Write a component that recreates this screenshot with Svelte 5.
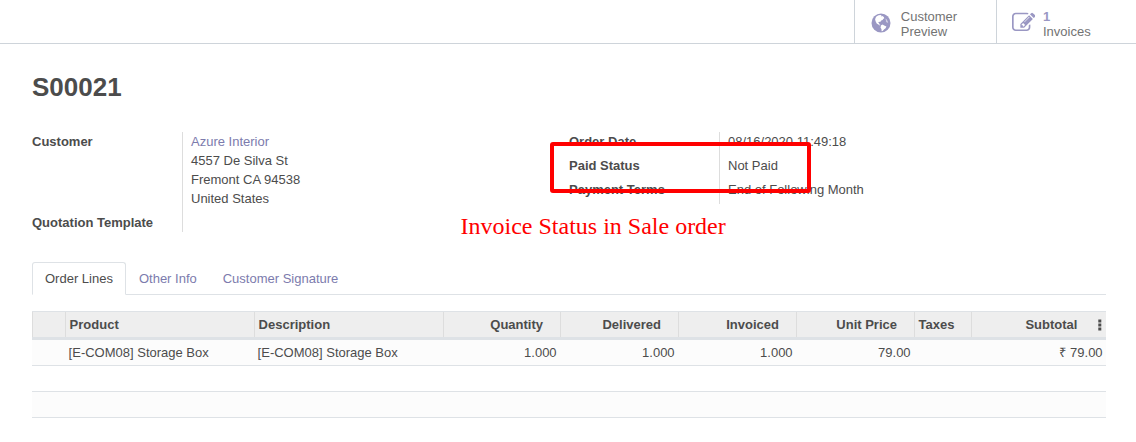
<script>
  const address = ['4557 De Silva St', 'Fremont CA 94538', 'United States'];
  const order = [
    ['Order Date', '08/16/2020 11:49:18'],
    ['Paid Status', 'Not Paid'],
    ['Payment Terms', 'End of Following Month'],
  ];
  const tabs = ['Order Lines', 'Other Info', 'Customer Signature'];
  const columns = [
    { label: '', value: '' },
    { label: 'Product', value: '[E-COM08] Storage Box' },
    { label: 'Description', value: '[E-COM08] Storage Box' },
    { label: 'Quantity', value: '1.000', num: true },
    { label: 'Delivered', value: '1.000', num: true },
    { label: 'Invoiced', value: '1.000', num: true },
    { label: 'Unit Price', value: '79.00', num: true },
    { label: 'Taxes', value: '' },
    { label: 'Subtotal', value: '₹ 79.00', num: true, last: true },
  ];
</script>

<div class="page">
  <header class="buttons">
    <div class="stat preview">
      <svg class="globe" width="20" height="20" viewBox="0 0 20 20">
        <circle cx="10" cy="10" r="9.5" fill="#9a97c3" />
        <path fill="#fff" d="M5.6 3.2 7.6 2.2 9.6 2 10.6 2.6 9.8 3.4 11.4 3 12.8 4 13.3 5.3 12.2 6 11.6 7 10.2 7.6 9.2 9 8 8.8 7.2 9.6 8.1 10.3 8.4 11.4 9.6 12.1 8.9 12.4 7.3 11.5 5.7 10.5 4.7 8.5 4.1 6.5 4.6 4.8Z" />
        <path fill="#fff" d="M10.1 12.2 11.6 11.6 13.2 12.6 15.4 13.6 14.6 15.3 13.2 16.2 11.7 18 10.6 18.2 10.5 16.2 9.5 14.4Z" />
        <path fill="#fff" opacity=".55" d="M14.2 5.6 15.6 6.2 16.8 8.4 17.2 9.8 15.8 9.4 14.8 8.2 15 7.2Z" />
      </svg>
      <span>Customer<br />Preview</span>
    </div>
    <div class="stat invoices">
      <svg class="edit" width="23.4" height="23.4" viewBox="0 0 1792 1792">
        <path fill="#9a97c3" d="M888 1184l116-116-152-152-116 116v56h96v96h56zm440-720q-16-16-33 1l-350 350q-17 17-1 33t33-1l350-350q17-17 1-33zm80 594v190q0 119-84.5 203.5t-203.5 84.5h-832q-119 0-203.5-84.5t-84.5-203.5v-832q0-119 84.5-203.5t203.5-84.5h832q63 0 117 25 15 7 18 23 3 17-9 29l-49 49q-14 14-32 8-23-6-45-6h-832q-66 0-113 47t-47 113v832q0 66 47 113t113 47h832q66 0 113-47t47-113v-126q0-13 9-22l64-64q15-15 35-7t20 29zm-96-738l288 288-672 672h-288v-288zm444 132l-92 92-288-288 92-92q28-28 68-28t68 28l152 152q28 28 28 68t-28 68z" />
      </svg>
      <span><b>1</b><br />Invoices</span>
    </div>
  </header>

  <main>
    <h1>S00021</h1>

    <div class="groups">
      <div class="group">
        <div class="field customer">
          <div class="label">Customer</div>
          <div class="value">
            <span class="link">Azure Interior</span>
            {#each address as line}<div>{line}</div>{/each}
          </div>
        </div>
        <div class="field">
          <div class="label">Quotation Template</div>
          <div class="value"></div>
        </div>
      </div>
      <div class="group">
        {#each order as [label, value]}
          <div class="field">
            <div class="label">{label}</div>
            <div class="value">{value}</div>
          </div>
        {/each}
      </div>
      <div class="highlight"></div>
      <div class="caption">Invoice Status in Sale order</div>
    </div>

    <nav>
      {#each tabs as tab, i}
        <div class="tab" class:active={i === 0}>{tab}</div>
      {/each}
    </nav>

    <div class="table">
      <div class="row head">
        {#each columns as c}
          <div class="cell" class:num={c.num} class:last={c.last}>
            {c.label}
            {#if c.last}
              <svg class="dots" width="4" height="12" viewBox="0 0 4 12">
                <path fill="#4c4c4c" d="M.3 .5h3v3h-3zM.3 4.5h3v3h-3zM.3 8.5h3v3h-3z" />
              </svg>
            {/if}
          </div>
        {/each}
      </div>
      <div class="row shade">
        {#each columns as c}
          <div class="cell" class:num={c.num}>{c.value}</div>
        {/each}
      </div>
      <div class="row"></div>
      <div class="row shade"></div>
    </div>
  </main>
</div>

<style>
  :global(body) {
    background: #fff;
  }
  .page {
    height: 442px;
    overflow: hidden;
    font: 13px/19px "Liberation Sans", Arial, sans-serif;
    color: #4c4c4c;
  }
  .page * {
    box-sizing: border-box;
  }
  .buttons {
    height: 44px;
    display: flex;
    justify-content: flex-end;
    border-bottom: 1px solid #ced4da;
  }
  .stat {
    display: flex;
    border-left: 1px solid #ced4da;
    padding-top: 9px;
    line-height: 15px;
    color: #737373;
  }
  .preview {
    width: 142px;
  }
  .invoices {
    width: 140px;
  }
  .stat b {
    color: #9a97c3;
  }
  .globe {
    margin: 4px 10px 0 15.5px;
  }
  .preview span {
    margin-left: 0.3px;
  }
  .edit {
    margin: 2px 8.1px 0 14.5px;
  }
  main {
    padding: 0 30px 0 32px;
  }
  h1 {
    margin: 0;
    padding-top: 28px;
    height: 88px;
    font-size: 26px;
    line-height: 30px;
  }
  .groups {
    position: relative;
    display: grid;
    grid-template-columns: 537px 537px;
    align-items: start;
    height: 130px;
  }
  .field {
    display: grid;
    grid-template-columns: 150px 1fr;
    height: 24px;
  }
  .field.customer {
    height: 81px;
  }
  .group:first-child .field:last-child {
    height: 19px;
  }
  .label {
    font-weight: bold;
  }
  .value {
    border-left: 1px solid #ddd;
    padding-left: 8px;
  }
  .link,
  .tab {
    color: #7c7bad;
  }
  .highlight {
    position: absolute;
    left: 518px;
    top: 10px;
    width: 261px;
    height: 51px;
    border: 4px solid #f00;
    border-radius: 3px;
  }
  .caption {
    position: absolute;
    left: 428.5px;
    top: 80px;
    font: 24px/28px "Liberation Serif", "Times New Roman", serif;
    color: #f00;
    white-space: nowrap;
  }
  nav {
    display: flex;
    height: 33px;
    border-bottom: 1px solid #dee2e6;
  }
  .tab {
    height: 33px;
    padding: 6px 12px;
    border: 1px solid transparent;
  }
  .tab.active {
    color: #4c4c4c;
    background: #fff;
    border-color: #dee2e6 #dee2e6 #fff;
    border-radius: 3px 3px 0 0;
  }
  .table {
    margin-top: 16px;
  }
  .row {
    display: grid;
    grid-template-columns: 33px 189px 189px 117px 118px 118px 118px 57px 135px;
    height: 26px;
    border-bottom: 1px solid #dee2e6;
  }
  .cell {
    padding: 3px 3.4px 0 3.6px;
    white-space: nowrap;
  }
  .num {
    text-align: right;
  }
  .shade {
    background: #fcfcfc;
  }
  .head {
    height: 29px;
    background: #eee;
    border-top: 1px solid #dee2e6;
    border-bottom: 3px solid #dee2e6;
    font-weight: bold;
  }
  .head .cell {
    border-left: 1px solid #ddd;
  }
  .head .num {
    padding-right: 17px;
  }
  .head .last {
    padding-right: 4px;
  }
  .dots {
    margin-left: 17px;
    vertical-align: -2px;
  }
</style>
